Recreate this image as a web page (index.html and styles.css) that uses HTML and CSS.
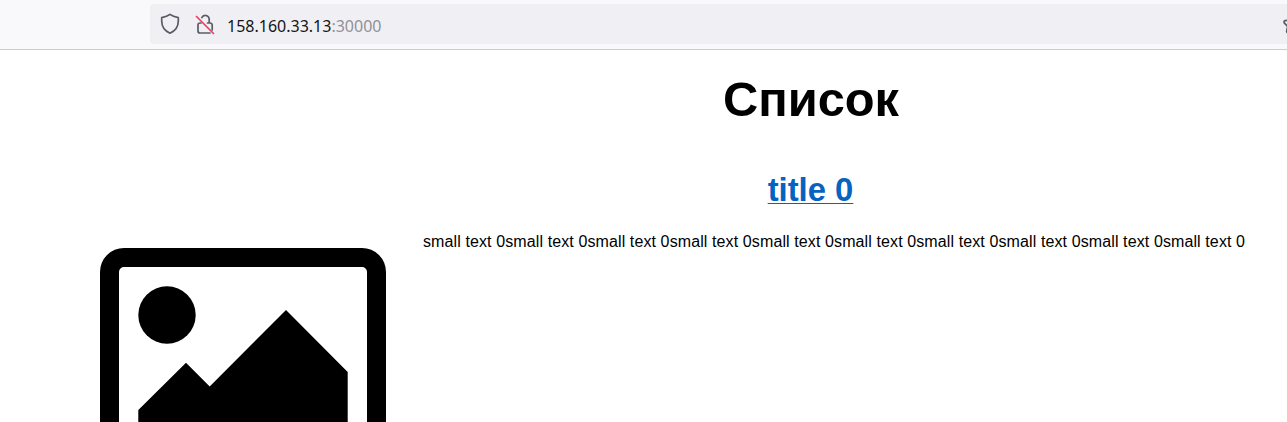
FILE: index.html
```html
<!DOCTYPE html>
<html lang="ru">
<head>
<meta charset="utf-8">
<title>Список</title>
<link rel="stylesheet" href="styles.css">
</head>
<body>
<header class="toolbar">
  <div class="address">
    <svg class="icon shield" viewBox="0 0 20 22"><path d="M10 1.3Q13 3.6 18.3 4.6V8C18.3 14 15 18 10 20.2 5 18 1.7 14 1.7 8V4.6Q7 3.6 10 1.3Z"/></svg>
    <svg class="icon lock" viewBox="0 0 20 22"><path d="M6.8 4.6A3.9 3.9 0 0 1 14.2 6V9.7M6 10H5a2 2 0 0 0-2 2v6a2 2 0 0 0 2 2H15M12.5 10h2.7a2 2 0 0 1 2 2v5"/><path class="slash" d="M1.5 3.5 18.5 20.5"/></svg>
    <span class="url">158.160.33.13<span class="port">:30000</span></span>
    <svg class="icon star" viewBox="0 0 20 22"><path d="m10 2-2.6 5.1-5.2.5Q.6 8.2 1.2 9.8L4.6 13.4 3.6 18.4Q4 20 5.2 19.4L10 16.8l4.8 2.6q1.2.6 1.6-1l-1-5 3.4-3.6q.6-1.6-1-2.2l-5.2-.5Z"/></svg>
  </div>
</header>
<main class="page">
  <h1 class="heading">Список</h1>
  <article class="item">
    <svg class="picture" viewBox="0 0 286 174"><path fill-rule="evenodd" d="M24 0H262a24 24 0 0 1 24 24V214a24 24 0 0 1-24 24H24a24 24 0 0 1-24-24V24A24 24 0 0 1 24 0ZM24 19a5 5 0 0 0-5 5V214a5 5 0 0 0 5 5H262a5 5 0 0 0 5-5V24a5 5 0 0 0-5-5Z"/><circle cx="67" cy="67" r="28.7"/><path d="M38.3 162 86 114.7 109.7 138.5 186 62 247.7 124V200H38.3Z"/></svg>
    <div class="content">
      <h2 class="title"><a class="link" href="#">title 0</a></h2>
      <p class="text">small text 0small text 0small text 0small text 0small text 0small text 0small text 0small text 0small text 0small text 0</p>
    </div>
  </article>
</main>
</body>
</html>
```
FILE: styles.css
```css
* { box-sizing: border-box; }
body { margin: 0; height: 422px; overflow: hidden; background: #fff; color: #000; font-family: "Liberation Sans", Arial, sans-serif; }
.toolbar { height: 50px; padding: 4px 0 0 150px; background: #f9f9fb; border-bottom: 1px solid #cccccf; }
.address { display: flex; align-items: center; height: 40px; padding-left: 10px; background: #f0f0f4; border-radius: 4px 0 0 4px; overflow: hidden; }
.icon { flex: none; width: 20px; height: 22px; fill: none; stroke: #5b5b66; stroke-width: 1.7; stroke-linejoin: round; stroke-linecap: round; }
.lock { margin-left: 15px; }
.slash { stroke: #f03c66; }
.url { margin-left: 12px; padding-top: 4px; font: 16px "Noto Sans", sans-serif; color: #15141a; }
.port { color: #919197; }
.star { margin-left: auto; margin-right: -16px; }
.page { padding-top: 22px; }
.heading { margin: 0; padding-left: 335px; text-align: center; font-size: 48.8px; line-height: 55px; }
.item { display: flex; }
.picture { flex: none; width: 286px; height: 174px; margin: 121px 37px 0 100px; }
.content { width: 822px; padding-top: 44px; }
.title { margin: 0; padding-right: 47px; text-align: center; font-size: 32.8px; line-height: 38px; }
.link { color: #0563c1; text-decoration-thickness: 1px; text-underline-offset: 2px; text-decoration-skip-ink: none; }
.text { margin: 24px 0 0; font-size: 16px; line-height: 18px; letter-spacing: 0.108px; white-space: nowrap; }
```
